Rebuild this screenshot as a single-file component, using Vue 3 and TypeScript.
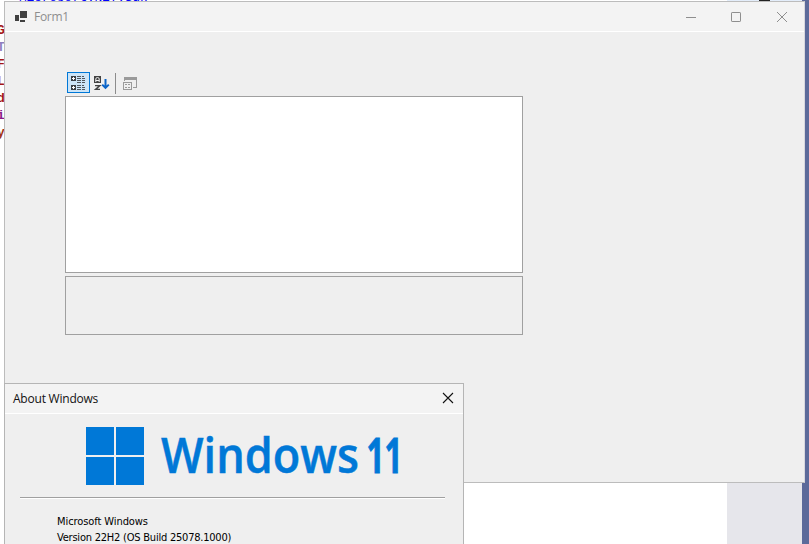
<script setup lang="ts">
const codeFragments: string[] = ['G', 'Ty', 'F:', 'Le', 'de', 'if', 'y(']
const versionLines: string[] = ['Microsoft Windows', 'Version 22H2 (OS Build 25078.1000)']
</script>

<template>
  <main class="desktop">
    <div class="editor">
      <div class="editor-page">
        <div class="code-top">Microsoft.NET.Sdk"</div>
        <div class="code-lines">
          <div v-for="(line, i) in codeFragments" :key="i" class="code" :class="'tone-' + i">{{ line }}</div>
        </div>
      </div>
      <div class="side-panel"><i class="side-mark"></i></div>
      <div class="frame-edge"></div>
    </div>

    <section class="window form-window">
      <header class="titlebar">
        <svg class="app-icon" width="14" height="12" viewBox="0 0 14 12" shape-rendering="crispEdges">
          <path fill="#404040" d="M0 4h4v6H0zM5 0h7v7H5zM5 9h5v2H5z" />
        </svg>
        <span class="form-title">Form1</span>
        <div class="controls">
          <svg width="10" height="10" viewBox="0 0 10 10"><path d="M0 5.5h10" /></svg>
          <svg width="10" height="10" viewBox="0 0 10 10"><rect x=".5" y=".5" width="9" height="9" rx=".6" /></svg>
          <svg width="10" height="10" viewBox="0 0 10 10"><path d="M0 0l10 10M10 0L0 10" /></svg>
        </div>
      </header>
      <div class="property-grid">
        <div class="toolbar">
          <button class="tool selected" aria-label="Categorized">
            <svg width="21" height="19" viewBox="0 0 21 19" shape-rendering="crispEdges">
              <path fill="#3a3f44" d="M3 3h5v5H3zM3 12h5v5H3z" />
              <path fill="#fff" d="M5 4h1v1h1v1H6v1H5V6H4V5h1zM5 13h1v1h1v1H6v1H5v-1H4v-1h1z" />
              <path fill="#50565c" d="M9 3h4v1H9zM9 5h4v1H9zM9 7h4v1H9zM9 9h4v1H9zM9 12h4v1H9zM9 14h4v1H9zM9 16h4v1H9zM14 3h2v1h-2zM14 5h3v1h-3zM14 7h3v1h-3zM14 9h3v1h-3zM14 12h2v1h-2zM14 14h3v1h-3zM14 16h3v1h-3z" />
            </svg>
          </button>
          <button class="tool" aria-label="Alphabetical">
            <svg width="21" height="19" viewBox="0 0 21 19">
              <path fill="#424242" shape-rendering="crispEdges" d="M3 3h7v7H3z" />
              <path d="M4.8 9V6Q4.8 4.5 6.5 4.5T8.2 6V9M4.8 7.5h3.4" fill="none" stroke="#efefef" />
              <path d="M4 12.6h4.8L4.6 16.4H9" fill="none" stroke="#424242" stroke-width="1.4" />
              <path d="M14.5 6v9M11.2 11.6l3.3 3.3 3.3-3.3" fill="none" stroke="#0a64c8" stroke-width="2" />
            </svg>
          </button>
          <i class="divider"></i>
          <button class="tool" aria-label="Property pages">
            <svg width="21" height="19" viewBox="0 0 21 19" shape-rendering="crispEdges">
              <path fill="#9a9a9a" d="M4 4h13v3H4zM16 7h1v8h-4v-1h3zM4 7h1v1H4zM3 9h9v8H3z" />
              <path fill="#efefef" d="M4 10h7v6H4z" />
              <path fill="#9a9a9a" d="M5 11h2v1H5zM8 11h2v1H8zM5 14h2v1H5zM8 14h2v1H8z" />
            </svg>
          </button>
        </div>
        <div class="grid-list"></div>
        <div class="grid-help"></div>
      </div>
    </section>

    <section class="window about-window">
      <header class="titlebar">
        <span class="about-title">About Windows</span>
        <svg class="about-close" width="10" height="10" viewBox="0 0 10 10"><path d="M0 0l10 10M10 0L0 10" /></svg>
      </header>
      <div class="brand">
        <div class="logo"><i v-for="n in 4" :key="n"></i></div>
        <svg class="wordmark" width="246" height="58" viewBox="0 0 246 58">
          <text x="0" y="46" textLength="198" lengthAdjust="spacingAndGlyphs">Windows</text>
          <text class="eleven" x="205.5" y="46" textLength="36" lengthAdjust="spacingAndGlyphs">11</text>
        </svg>
      </div>
      <div class="rule"></div>
      <div class="details">
        <div v-for="(line, i) in versionLines" :key="line" :class="'detail-' + i">{{ line }}</div>
      </div>
    </section>
  </main>
</template>

<style>
body {
  margin: 0;
  overflow: hidden;
}
</style>

<style scoped>
.desktop {
  position: relative;
  width: 809px;
  height: 544px;
  overflow: hidden;
  background: #fff;
  font-family: "Open Sans", "Noto Sans", sans-serif;
}
.editor {
  display: flex;
  height: 544px;
}
.editor-page {
  width: 727px;
  overflow: hidden;
  font: 13px/17px "Liberation Mono", monospace;
}
.code-top {
  height: 22px;
  margin-top: -11px;
  padding-left: 19px;
  line-height: 17px;
  color: #00f;
  white-space: pre;
  letter-spacing: -0.25px;
}
.code-lines {
  margin: 11px 0 0 -3px;
}
.code {
  height: 17px;
  font-weight: 700;
}
.tone-0, .tone-2, .tone-3, .tone-4 { color: #a31515; }
.tone-1 { color: #8f80c0; }
.tone-5 { color: #8a1a8a; }
.tone-6 { color: #a33515; }
.side-panel {
  width: 75px;
  background: linear-gradient(#e3edfa 2px, #e6e6eb 2px);
}
.side-mark {
  display: block;
  width: 11px;
  height: 1px;
  margin-left: 32px;
  background: #222;
}
.frame-edge {
  width: 7px;
  background: #5c6a9a;
}
.window {
  position: absolute;
  box-sizing: border-box;
  background: #efefef;
}
.form-window {
  left: 4px;
  top: 1px;
  width: 801px;
  height: 482px;
  border: 1px solid #bcbcbc;
  border-right-color: #d8d8df;
}
.titlebar {
  display: flex;
  align-items: center;
  box-sizing: border-box;
  height: 30px;
  background: #f3f3f3;
  border-bottom: 1px solid #fff;
  font-size: 12px;
}
.app-icon {
  margin: 0 5px 0 10px;
}
.form-title {
  color: #8e8e8e;
  letter-spacing: -0.3px;
}
.controls {
  display: flex;
  gap: 35px;
  margin: 0 17px 0 auto;
}
.controls svg {
  fill: none;
  stroke: #8e8e8e;
  stroke-width: 1;
}
.controls svg:nth-child(3) {
  margin-left: 1px;
}
.property-grid {
  width: 458px;
  margin: 39px 0 0 60px;
}
.toolbar {
  display: flex;
  align-items: center;
  box-sizing: border-box;
  height: 25px;
  padding: 0 0 2px 2px;
}
.tool {
  display: flex;
  align-items: center;
  justify-content: center;
  box-sizing: border-box;
  width: 23px;
  height: 21px;
  padding: 0;
  border: 1px solid transparent;
  background: none;
}
.tool.selected {
  border-color: #0078d7;
  background: #cce4f7;
}
.divider {
  width: 1px;
  height: 21px;
  margin: 2px 3px 0 2px;
  background: #8c8c8c;
}
.grid-list,
.grid-help {
  box-sizing: border-box;
  border: 1px solid #a0a0a0;
}
.grid-list {
  height: 177px;
  background: #fff;
}
.grid-help {
  height: 59px;
  margin-top: 3px;
}
.about-window {
  left: 4px;
  top: 383px;
  width: 460px;
  height: 170px;
  border: 1px solid #b5b5b5;
}
.about-title {
  margin-left: 8px;
  color: #111;
  letter-spacing: -0.22px;
}
.about-close {
  margin: -1px 10px 0 auto;
  stroke: #111;
  stroke-width: 1.1;
  overflow: visible;
}
.brand {
  display: flex;
  gap: 17px;
  padding: 13px 0 0 81px;
}
.logo {
  display: grid;
  grid-template-columns: 28px 28px;
  grid-auto-rows: 28px;
  gap: 2px;
}
.logo i {
  background: #0078d7;
}
.wordmark {
  overflow: visible;
  fill: #0078d7;
  stroke: #0078d7;
  stroke-width: 0.5;
  font-size: 48px;
  font-weight: 600;
}
.eleven {
  font-weight: 700;
  stroke-width: 0.9;
}
.rule {
  width: 425px;
  height: 1px;
  margin: 12px 0 0 15px;
  background: #a0a0a0;
  border-bottom: 1px solid #fff;
}
.details {
  padding: 15px 0 0 52px;
  color: #000;
  font: 11px/16px "DejaVu Sans Condensed", "DejaVu Sans", sans-serif;
  white-space: nowrap;
}
.detail-0 {
  letter-spacing: -0.08px;
}
.detail-1 {
  letter-spacing: -0.22px;
}
</style>
